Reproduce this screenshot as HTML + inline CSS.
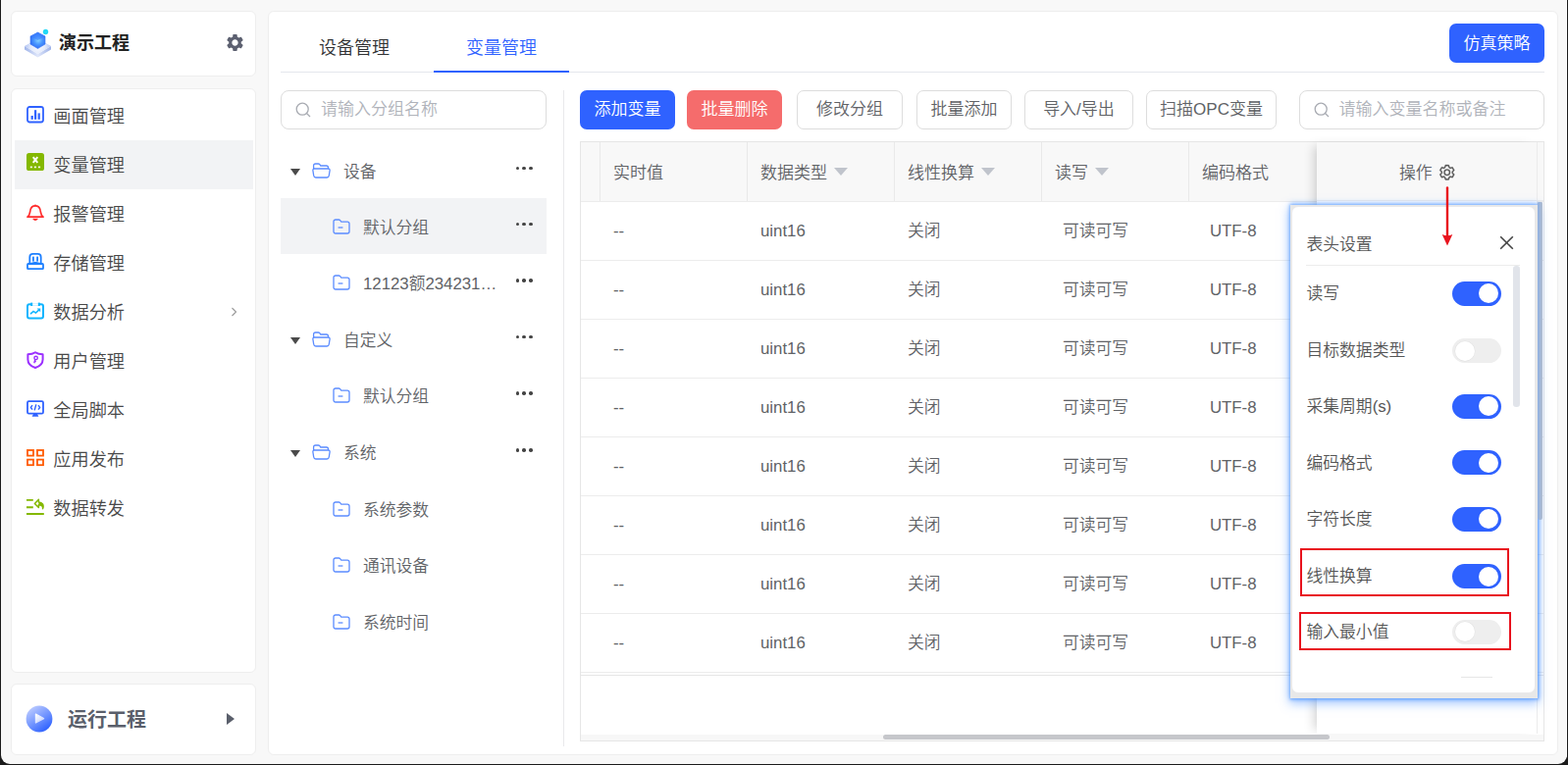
<!DOCTYPE html>
<html lang="zh-CN">
<head>
<meta charset="utf-8">
<title>变量管理</title>
<style>
*{box-sizing:border-box;margin:0;padding:0}
html,body{width:1598px;height:780px;overflow:hidden;background:#1b1b1b}
body{font-family:"Liberation Sans","Noto Sans CJK SC",sans-serif;color:#333;position:relative;font-weight:350}
.win{position:absolute;left:1px;top:0;width:1596px;height:779px;background:#f8f8f8;border-radius:0 0 9px 9px;overflow:hidden}
.cv{position:absolute;left:-1px;top:0;width:1598px;height:780px}
.abs{position:absolute}
.panel{position:absolute;background:#fff;border:1px solid #eeeeee;border-radius:6px}
.t{position:absolute;white-space:nowrap;line-height:1}
/* sidebar */
.mi{position:absolute;left:15px;width:243px;height:50px}
.mi .t{left:39.300px;top:16.700px;font-size:18.200px;color:#484848}
.mi svg{position:absolute;left:12px;top:15px}
.mi.act{background:#f2f3f5}
/* tree */
.tr{position:absolute;left:286px;width:271px;height:57px}
.tr .t{font-size:16.800px;color:#606266;top:22.800px}
.dots{position:absolute;left:239.500px;top:24.800px;width:17px;height:4px}
.dots i{position:absolute;top:0;width:3.6px;height:3.6px;border-radius:50%;background:#444}
.caret{position:absolute;left:10px;top:26.800px;width:0;height:0;border-left:5.5px solid transparent;border-right:5.5px solid transparent;border-top:7px solid #4a4a4a}
/* buttons */
.btn{position:absolute;top:92px;height:40px;border-radius:7px;font-size:17px;text-align:center;line-height:38px;white-space:nowrap}
.btn.pl{border:1px solid #dddddd;background:#fff;color:#606266}
.inp{position:absolute;top:92px;height:40px;border:1px solid #dddddd;border-radius:8px;background:#fff}
.inp .t{font-size:17px;color:#b0b3ba;top:10px;left:40px}
/* table */
.th{position:absolute;top:145px;height:60px;background:#f8f8f8}
.vd{position:absolute;top:145px;width:1px;height:60px;background:#e9e9e9}
.th .t{font-size:17px;color:#606266;top:23px;left:14px}
.td{position:absolute;font-size:16.800px;color:#606266;white-space:nowrap;line-height:1}
.rl{position:absolute;left:592px;width:981px;height:1px;background:#ececec}
.sort{position:absolute;top:26px;width:0;height:0;border-left:7px solid transparent;border-right:7px solid transparent;border-top:8px solid #c0c4cc}
/* popover */
.sw{position:absolute;left:163px;width:50px;height:25px;border-radius:12.5px;background:#2f62ff}
.sw i{position:absolute;top:2.500px;left:26.500px;width:20px;height:20px;border-radius:50%;background:#fff}
.sw.off{background:#eeeeee}
.sw.off i{left:2.500px;box-shadow:0 0 0 .5px #e2e2e2}
.pl{}
.pr .t{font-size:16.800px;color:#555;left:14.500px}
</style>
</head>
<body>
<div class="win"><div class="cv">

<!-- ============ SIDEBAR ============ -->
<div class="panel" style="left:11px;top:11px;width:250px;height:67px"></div>
<svg class="abs" style="left:24px;top:28px" width="30" height="32" viewBox="0 0 30 32">
  <defs>
    <radialGradient id="lg1" cx="14.5" cy="20" r="13" gradientUnits="userSpaceOnUse"><stop offset="0" stop-color="#f7f9ff"/><stop offset="0.55" stop-color="#e3eafb"/><stop offset="1" stop-color="#b3c5f3"/></radialGradient>
    <radialGradient id="lg2" cx="15" cy="13" r="9.500" gradientUnits="userSpaceOnUse"><stop offset="0" stop-color="#86d2ff"/><stop offset="0.45" stop-color="#4a98ff"/><stop offset="1" stop-color="#2862f0"/></radialGradient>
    <linearGradient id="lg3" x1="0" y1="0" x2="1" y2="0"><stop offset="0" stop-color="#9fb4ea"/><stop offset="0.5" stop-color="#dfe6fa"/><stop offset="1" stop-color="#9cb1e8"/></linearGradient>
  </defs>
  <polygon points="1,19 14.500,27 28,19 28,22.500 14.500,30.500 1,22.500" fill="url(#lg3)"/>
  <polygon points="1,19 14.500,11.500 28,19 14.500,27" fill="url(#lg1)"/>
  <polygon points="7,9 14.500,5 22,9 22,17 14.500,21.500 7,17" fill="url(#lg2)" stroke="url(#lg2)" stroke-width="0.600" stroke-linejoin="round"/>
  <polygon points="7,9 14.500,5 22,9 14.500,13" fill="#3a7cff" opacity="0.550"/>
  <circle cx="22.500" cy="4.500" r="2.700" fill="#22d9f6"/>
</svg>
<div class="t" style="left:60px;top:35px;font-size:18px;font-weight:bold;color:#222">演示工程</div>
<svg class="abs" style="left:229px;top:32.5px" width="21" height="21" viewBox="0 0 24 24"><path fill="#5c6070" d="M19.14 12.94c.04-.3.06-.61.06-.94 0-.32-.02-.64-.07-.94l2.03-1.58a.49.49 0 0 0 .12-.61l-1.92-3.32a.488.488 0 0 0-.59-.22l-2.39.96c-.5-.38-1.03-.7-1.62-.94l-.36-2.54a.484.484 0 0 0-.48-.41h-3.84c-.24 0-.43.17-.47.41l-.36 2.54c-.59.24-1.13.57-1.62.94l-2.39-.96c-.22-.08-.47 0-.59.22L2.74 8.87c-.12.21-.08.47.12.61l2.03 1.58c-.05.3-.09.63-.09.94s.02.64.07.94l-2.03 1.58a.49.49 0 0 0-.12.61l1.92 3.32c.12.22.37.29.59.22l2.39-.96c.5.38 1.03.7 1.62.94l.36 2.54c.05.24.24.41.48.41h3.84c.24 0 .44-.17.47-.41l.36-2.54c.59-.24 1.13-.56 1.62-.94l2.39.96c.22.08.47 0 .59-.22l1.92-3.32c.12-.22.07-.47-.12-.61l-2.01-1.58zM12 15.6c-1.98 0-3.600-1.62-3.600-3.600s1.62-3.600 3.600-3.600 3.600 1.62 3.600 3.600-1.62 3.600-3.600 3.600z"/></svg>

<div class="panel" style="left:11px;top:90px;width:250px;height:596px"></div>
<div class="mi" style="top:93px"><svg width="18" height="18" viewBox="0 0 18 18"><rect x="1" y="1" width="16" height="15.5" rx="2.2" fill="none" stroke="#2f62ff" stroke-width="1.8"/><rect x="4.6" y="10" width="2.2" height="3.8" fill="#2f62ff"/><rect x="8" y="4.2" width="2.2" height="9.6" fill="#2f62ff"/><rect x="11.6" y="7.4" width="2.2" height="6.4" fill="#2f62ff"/></svg><div class="t">画面管理</div></div>
<div class="mi act" style="top:143px"><svg style="top:13px" width="18" height="18" viewBox="0 0 18 18"><rect x="0" y="0" width="18" height="18" rx="2.6" fill="#84b800"/><path d="M6.700 4.200 L11.300 9.800 M11.300 4.200 L6.700 9.800" stroke="#fff" stroke-width="1.900"/><rect x="3.800" y="13.600" width="2.100" height="1.600" fill="#fff"/><rect x="7.900" y="13.600" width="2.100" height="1.600" fill="#fff"/><rect x="12" y="13.600" width="2.100" height="1.600" fill="#fff"/></svg><div class="t">变量管理</div></div>
<div class="mi" style="top:193px"><svg width="18" height="18" viewBox="0 0 18 18"><path d="M1 13.2 C3.6 11.2 3.4 8.8 3.9 6.4 C4.4 3.6 6.4 1.9 9 1.9 C11.6 1.9 13.6 3.6 14.1 6.4 C14.6 8.8 14.4 11.2 17 13.2 Z" fill="none" stroke="#ff2d2d" stroke-width="1.7" stroke-linejoin="round"/><path d="M6.2 14.8 H11.8 C11.4 16.2 10.3 16.9 9 16.9 C7.7 16.9 6.600 16.200 6.200 14.800 Z" fill="#ff2d2d"/><circle cx="9" cy="1.6" r="1" fill="#ff2d2d"/></svg><div class="t">报警管理</div></div>
<div class="mi" style="top:243px"><svg width="18" height="18" viewBox="0 0 18 18"><path d="M3.300 10.600 V4.200 C3.300 2 4.500 0.900 6.500 0.900 H11.500 C13.500 0.900 14.700 2 14.700 4.200 V10.600" fill="none" stroke="#1e80ff" stroke-width="1.800"/><rect x="1" y="11" width="16" height="5.200" rx="0.800" fill="none" stroke="#1e80ff" stroke-width="1.800"/><rect x="6" y="3.600" width="1.800" height="5" fill="#1e80ff"/><rect x="10.200" y="3.600" width="1.800" height="5" fill="#1e80ff"/><path d="M3 11 L9 9.400 L15 11" fill="none" stroke="#1e80ff" stroke-width="1.400"/></svg><div class="t">存储管理</div></div>
<div class="mi" style="top:293px"><svg width="18" height="18" viewBox="0 0 18 18"><rect x="1" y="2.200" width="16" height="14.400" rx="2" fill="none" stroke="#10b5ff" stroke-width="2"/><rect x="4.200" y="0.600" width="2" height="3.4" fill="#10b5ff"/><rect x="11.800" y="0.600" width="2" height="3.400" fill="#10b5ff"/><rect x="6.2" y="1.2" width="5.6" height="2" fill="#fff"/><path d="M4 12.2 L7 9.4 L9.4 11 L13.4 7.4" fill="none" stroke="#10b5ff" stroke-width="1.6"/><path d="M10.6 6.6 H14.2 V10.200 Z" fill="#10b5ff"/></svg><div class="t">数据分析</div></div>
<div class="mi" style="top:343px"><svg width="18" height="18" viewBox="0 0 18 18"><path d="M9 1.2 C11 2.6 13.600 3.200 16.600 3.200 V8.400 C16.600 12.400 13.600 15.400 9 17 C4.400 15.400 1.400 12.400 1.400 8.400 V3.200 C4.400 3.200 7 2.600 9 1.200 Z" fill="none" stroke="#9b30ff" stroke-width="2" stroke-linejoin="round"/><circle cx="9.600" cy="7" r="1.700" fill="none" stroke="#9b30ff" stroke-width="1.400"/><path d="M8.800 8.400 L7.800 12.200 M7.600 10.600 H9.800" stroke="#9b30ff" stroke-width="1.400" fill="none"/></svg><div class="t">用户管理</div></div>
<div class="mi" style="top:393px"><svg width="18" height="18" viewBox="0 0 18 18"><rect x="1" y="1.200" width="16" height="12.400" rx="1.400" fill="none" stroke="#2f62ff" stroke-width="1.800"/><path d="M5.600 16.800 L7 14 H11 L12.400 16.800 Z" fill="#2f62ff"/><path d="M6 5.200 L4.400 7.400 L6 9.600 M12 5.200 L13.600 7.400 L12 9.600 M9.800 4.400 L8.200 10.400" fill="none" stroke="#2f62ff" stroke-width="1.400"/></svg><div class="t">全局脚本</div></div>
<div class="mi" style="top:443px"><svg width="18" height="18" viewBox="0 0 18 18"><g fill="none" stroke="#ff5a00" stroke-width="1.800"><rect x="1" y="1" width="6" height="5.600"/><rect x="11" y="1" width="6" height="5.600"/><rect x="1" y="10.600" width="6" height="5.600"/><rect x="11" y="10.600" width="6" height="5.600"/></g></svg><div class="t">应用发布</div></div>
<div class="mi" style="top:493px"><svg width="18" height="18" viewBox="0 0 18 18"><g fill="none" stroke="#84b800"><path d="M0 1.900 H6.800 M0 9.200 H6.800 M0 16 H17.800" stroke-width="1.900"/><path d="M16.600 10.600 C16.900 8 15.200 6.800 12.400 6.800 V9.600 L8.400 5.400 L12.400 1.200 V3.900 C16.200 4 18 7 16.600 10.600 Z" stroke-width="1.500" stroke-linejoin="round"/></g><path d="M16.600 10.600 C16.900 8 15.200 6.800 12.400 6.800 V3.900 C16.200 4 18 7 16.600 10.600 Z" fill="#84b800"/></svg><div class="t">数据转发</div></div>
<svg class="abs" style="left:234px;top:312px" width="9" height="12" viewBox="0 0 9 12"><path d="M2.5 2 L6.500 6 L2.500 10" fill="none" stroke="#999" stroke-width="1.100"/></svg>

<div class="panel" style="left:11px;top:697px;width:250px;height:73px"></div>
<svg class="abs" style="left:26px;top:719px" width="28" height="28" viewBox="0 0 28 28">
  <defs>
    <linearGradient id="pg1" x1="0.15" y1="0.1" x2="0.75" y2="0.95"><stop offset="0" stop-color="#b9c9ff"/><stop offset="0.55" stop-color="#6e92ff"/><stop offset="1" stop-color="#2f62ff"/></linearGradient>
    <linearGradient id="pg2" x1="0" y1="0" x2="0.6" y2="1"><stop offset="0" stop-color="#ffffff"/><stop offset="1" stop-color="#c9d6ff"/></linearGradient>
  </defs>
  <circle cx="14" cy="14" r="13.4" fill="url(#pg1)"/>
  <path d="M10.400 9 L18.600 13.600 L10.400 18 Z" fill="url(#pg2)" stroke="url(#pg2)" stroke-width="1.200" stroke-linejoin="round"/>
</svg>
<div class="t" style="left:69px;top:724px;font-size:20px;font-weight:bold;color:#5a5f6b">运行工程</div>
<div class="abs" style="left:231px;top:727px;width:0;height:0;border-top:6px solid transparent;border-bottom:6px solid transparent;border-left:8px solid #5a5f6b"></div>

<!-- ============ MAIN ============ -->
<div class="panel" style="left:273px;top:11px;width:1315px;height:759px"></div>
<div class="abs" style="left:286px;top:73px;width:1288px;height:1px;background:#e4e7ed"></div>
<div class="abs" style="left:442px;top:72px;width:138px;height:2px;background:#2f62ff"></div>
<div class="t" style="left:325px;top:40px;font-size:18px;color:#303133">设备管理</div>
<div class="t" style="left:475px;top:40px;font-size:18px;color:#2f62ff">变量管理</div>
<div class="btn" style="left:1477px;top:24px;width:97px;height:40px;line-height:41px;background:#2f62ff;color:#fff">仿真策略</div>
<div class="inp" style="left:286px;width:271px"><svg class="abs" style="left:13.500px;top:10.500px" width="16" height="16" viewBox="0 0 16 16"><circle cx="7.2" cy="7.200" r="6" fill="none" stroke="#a8abb2" stroke-width="1.300"/><path d="M11.500 11.500 L15 15" stroke="#a8abb2" stroke-width="1.300"/></svg><div class="t" style="left:40px">请输入分组名称</div></div>
<div class="abs" style="left:574px;top:92px;width:1px;height:669px;background:#e9e9eb"></div>
<div class="tr" style="top:145.1px"><div class="caret"></div><svg class="abs" style="left:32px;top:20.800px" width="19" height="16" viewBox="0 0 19 16"><path d="M1.600 6 V3 C1.600 1.800 2.300 1 3.500 1 H6.400 C7 1 7.400 1.200 7.800 1.700 L8.800 3 H14.600 C15.800 3 16.500 3.700 16.500 4.900 V6 M2.300 6 H16.700 C17.700 6 18.300 6.800 18.100 7.800 L17.300 13 C17.100 14.200 16.300 15 15.100 15 H3.900 C2.700 15 1.900 14.200 1.700 13 L0.900 7.800 C0.700 6.800 1.300 6 2.300 6 Z" fill="none" stroke="#5b8cff" stroke-width="1.300" stroke-linejoin="round"/></svg><div class="t" style="left:64px">设备</div><div class="dots"><i style="left:0"></i><i style="left:6.800px"></i><i style="left:13.600px"></i></div></div>
<div class="tr" style="top:202.1px;background:#f2f3f5"><svg class="abs" style="left:53px;top:20.800px" width="18" height="16" viewBox="0 0 18 16"><path d="M1 3 C1 1.800 1.800 1 3 1 H6.200 C6.800 1 7.200 1.200 7.600 1.700 L8.800 3.200 H15 C16.200 3.200 17 4 17 5.200 V13 C17 14.200 16.200 15 15 15 H3 C1.800 15 1 14.200 1 13 Z" fill="none" stroke="#5b8cff" stroke-width="1.300" stroke-linejoin="round"/><path d="M5.600 9 H10.400" stroke="#5b8cff" stroke-width="1.300"/></svg><div class="t" style="left:84px">默认分组</div><div class="dots"><i style="left:0"></i><i style="left:6.800px"></i><i style="left:13.600px"></i></div></div>
<div class="tr" style="top:259.6px"><svg class="abs" style="left:53px;top:20.800px" width="18" height="16" viewBox="0 0 18 16"><path d="M1 3 C1 1.800 1.800 1 3 1 H6.200 C6.800 1 7.200 1.200 7.600 1.700 L8.800 3.200 H15 C16.200 3.200 17 4 17 5.200 V13 C17 14.200 16.200 15 15 15 H3 C1.800 15 1 14.200 1 13 Z" fill="none" stroke="#5b8cff" stroke-width="1.300" stroke-linejoin="round"/><path d="M5.600 9 H10.400" stroke="#5b8cff" stroke-width="1.300"/></svg><div class="t" style="left:84px">12123额234231…</div><div class="dots"><i style="left:0"></i><i style="left:6.800px"></i><i style="left:13.600px"></i></div></div>
<div class="tr" style="top:317.1px"><div class="caret"></div><svg class="abs" style="left:32px;top:20.800px" width="19" height="16" viewBox="0 0 19 16"><path d="M1.600 6 V3 C1.600 1.800 2.300 1 3.500 1 H6.400 C7 1 7.400 1.200 7.800 1.700 L8.800 3 H14.600 C15.800 3 16.500 3.700 16.500 4.900 V6 M2.300 6 H16.700 C17.700 6 18.300 6.800 18.100 7.800 L17.300 13 C17.100 14.200 16.300 15 15.100 15 H3.900 C2.700 15 1.900 14.200 1.700 13 L0.900 7.800 C0.700 6.800 1.300 6 2.300 6 Z" fill="none" stroke="#5b8cff" stroke-width="1.300" stroke-linejoin="round"/></svg><div class="t" style="left:64px">自定义</div><div class="dots"><i style="left:0"></i><i style="left:6.800px"></i><i style="left:13.600px"></i></div></div>
<div class="tr" style="top:374.7px"><svg class="abs" style="left:53px;top:20.800px" width="18" height="16" viewBox="0 0 18 16"><path d="M1 3 C1 1.800 1.800 1 3 1 H6.200 C6.800 1 7.200 1.200 7.600 1.700 L8.800 3.200 H15 C16.200 3.200 17 4 17 5.200 V13 C17 14.200 16.200 15 15 15 H3 C1.800 15 1 14.200 1 13 Z" fill="none" stroke="#5b8cff" stroke-width="1.300" stroke-linejoin="round"/><path d="M5.600 9 H10.400" stroke="#5b8cff" stroke-width="1.300"/></svg><div class="t" style="left:84px">默认分组</div><div class="dots"><i style="left:0"></i><i style="left:6.800px"></i><i style="left:13.600px"></i></div></div>
<div class="tr" style="top:432.2px"><div class="caret"></div><svg class="abs" style="left:32px;top:20.800px" width="19" height="16" viewBox="0 0 19 16"><path d="M1.600 6 V3 C1.600 1.800 2.300 1 3.500 1 H6.400 C7 1 7.400 1.200 7.800 1.700 L8.800 3 H14.600 C15.800 3 16.500 3.700 16.500 4.900 V6 M2.300 6 H16.700 C17.700 6 18.300 6.800 18.100 7.800 L17.300 13 C17.100 14.200 16.300 15 15.100 15 H3.900 C2.700 15 1.900 14.200 1.700 13 L0.900 7.800 C0.700 6.800 1.300 6 2.300 6 Z" fill="none" stroke="#5b8cff" stroke-width="1.300" stroke-linejoin="round"/></svg><div class="t" style="left:64px">系统</div><div class="dots"><i style="left:0"></i><i style="left:6.800px"></i><i style="left:13.600px"></i></div></div>
<div class="tr" style="top:489.8px"><svg class="abs" style="left:53px;top:20.800px" width="18" height="16" viewBox="0 0 18 16"><path d="M1 3 C1 1.800 1.800 1 3 1 H6.200 C6.800 1 7.200 1.200 7.600 1.700 L8.800 3.200 H15 C16.200 3.200 17 4 17 5.200 V13 C17 14.200 16.200 15 15 15 H3 C1.800 15 1 14.200 1 13 Z" fill="none" stroke="#5b8cff" stroke-width="1.300" stroke-linejoin="round"/><path d="M5.600 9 H10.400" stroke="#5b8cff" stroke-width="1.300"/></svg><div class="t" style="left:84px">系统参数</div></div>
<div class="tr" style="top:547.3px"><svg class="abs" style="left:53px;top:20.800px" width="18" height="16" viewBox="0 0 18 16"><path d="M1 3 C1 1.800 1.800 1 3 1 H6.200 C6.800 1 7.200 1.200 7.600 1.700 L8.800 3.200 H15 C16.200 3.200 17 4 17 5.200 V13 C17 14.200 16.200 15 15 15 H3 C1.800 15 1 14.200 1 13 Z" fill="none" stroke="#5b8cff" stroke-width="1.300" stroke-linejoin="round"/><path d="M5.600 9 H10.400" stroke="#5b8cff" stroke-width="1.300"/></svg><div class="t" style="left:84px">通讯设备</div></div>
<div class="tr" style="top:604.9px"><svg class="abs" style="left:53px;top:20.800px" width="18" height="16" viewBox="0 0 18 16"><path d="M1 3 C1 1.800 1.800 1 3 1 H6.200 C6.800 1 7.200 1.200 7.600 1.700 L8.800 3.200 H15 C16.200 3.200 17 4 17 5.200 V13 C17 14.200 16.200 15 15 15 H3 C1.800 15 1 14.200 1 13 Z" fill="none" stroke="#5b8cff" stroke-width="1.300" stroke-linejoin="round"/><path d="M5.600 9 H10.400" stroke="#5b8cff" stroke-width="1.300"/></svg><div class="t" style="left:84px">系统时间</div></div>
<div class="btn" style="left:591px;width:97px;background:#2f62ff;color:#fff;line-height:40px">添加变量</div>
<div class="btn" style="left:700px;width:97px;background:#f56c6c;color:#fff;line-height:40px">批量删除</div>
<div class="btn pl" style="left:812px;width:108px">修改分组</div>
<div class="btn pl" style="left:934px;width:97px">批量添加</div>
<div class="btn pl" style="left:1044px;width:111px">导入/导出</div>
<div class="btn pl" style="left:1168px;width:133px">扫描OPC变量</div>
<div class="inp" style="left:1324px;width:250px"><svg class="abs" style="left:13.500px;top:10.500px" width="16" height="16" viewBox="0 0 16 16"><circle cx="7.2" cy="7.200" r="6" fill="none" stroke="#a8abb2" stroke-width="1.300"/><path d="M11.500 11.500 L15 15" stroke="#a8abb2" stroke-width="1.300"/></svg><div class="t" style="left:39.500px">请输入变量名称或备注</div></div>
<div class="abs" style="left:591px;top:144px;width:983px;height:612px;border:1px solid #e6e6e6;background:#fff"></div>
<div class="th" style="left:592px;width:20px"></div>
<div class="th" style="left:611px;width:151px"><div class="t">实时值</div></div>
<div class="th" style="left:761px;width:151px"><div class="t">数据类型</div><div class="sort" style="left:88.7px"></div></div>
<div class="th" style="left:911px;width:151px"><div class="t">线性换算</div><div class="sort" style="left:88.7px"></div></div>
<div class="th" style="left:1061px;width:151px"><div class="t">读写</div><div class="sort" style="left:55.1px"></div></div>
<div class="th" style="left:1211px;width:132px"><div class="t">编码格式</div></div>
<div class="vd" style="left:611px"></div><div class="vd" style="left:761px"></div><div class="vd" style="left:911px"></div><div class="vd" style="left:1061px"></div><div class="vd" style="left:1211px"></div>
<div class="rl" style="top:205px"></div>
<div class="rl" style="top:265px"></div>
<div class="td" style="left:625px;top:228px">--</div>
<div class="td" style="left:775px;top:228px">uint16</div>
<div class="td" style="left:925px;top:228px">关闭</div>
<div class="td" style="left:1083px;top:228px">可读可写</div>
<div class="td" style="left:1233px;top:228px">UTF-8</div>
<div class="rl" style="top:325px"></div>
<div class="td" style="left:625px;top:288px">--</div>
<div class="td" style="left:775px;top:288px">uint16</div>
<div class="td" style="left:925px;top:288px">关闭</div>
<div class="td" style="left:1083px;top:288px">可读可写</div>
<div class="td" style="left:1233px;top:288px">UTF-8</div>
<div class="rl" style="top:385px"></div>
<div class="td" style="left:625px;top:348px">--</div>
<div class="td" style="left:775px;top:348px">uint16</div>
<div class="td" style="left:925px;top:348px">关闭</div>
<div class="td" style="left:1083px;top:348px">可读可写</div>
<div class="td" style="left:1233px;top:348px">UTF-8</div>
<div class="rl" style="top:445px"></div>
<div class="td" style="left:625px;top:408px">--</div>
<div class="td" style="left:775px;top:408px">uint16</div>
<div class="td" style="left:925px;top:408px">关闭</div>
<div class="td" style="left:1083px;top:408px">可读可写</div>
<div class="td" style="left:1233px;top:408px">UTF-8</div>
<div class="rl" style="top:505px"></div>
<div class="td" style="left:625px;top:468px">--</div>
<div class="td" style="left:775px;top:468px">uint16</div>
<div class="td" style="left:925px;top:468px">关闭</div>
<div class="td" style="left:1083px;top:468px">可读可写</div>
<div class="td" style="left:1233px;top:468px">UTF-8</div>
<div class="rl" style="top:565px"></div>
<div class="td" style="left:625px;top:528px">--</div>
<div class="td" style="left:775px;top:528px">uint16</div>
<div class="td" style="left:925px;top:528px">关闭</div>
<div class="td" style="left:1083px;top:528px">可读可写</div>
<div class="td" style="left:1233px;top:528px">UTF-8</div>
<div class="rl" style="top:625px"></div>
<div class="td" style="left:625px;top:588px">--</div>
<div class="td" style="left:775px;top:588px">uint16</div>
<div class="td" style="left:925px;top:588px">关闭</div>
<div class="td" style="left:1083px;top:588px">可读可写</div>
<div class="td" style="left:1233px;top:588px">UTF-8</div>
<div class="rl" style="top:685px"></div>
<div class="rl" style="top:688px;background:#e6e6e6"></div>
<div class="td" style="left:625px;top:648px">--</div>
<div class="td" style="left:775px;top:648px">uint16</div>
<div class="td" style="left:925px;top:648px">关闭</div>
<div class="td" style="left:1083px;top:648px">可读可写</div>
<div class="td" style="left:1233px;top:648px">UTF-8</div>
<div class="abs" style="left:1342px;top:145px;width:225px;height:603px;background:#fff;box-shadow:-7px 0 10px -4px rgba(0,0,0,.17);border-right:1px solid #ececec"></div>
<div class="abs" style="left:1342px;top:145px;width:225px;height:60px;background:#f8f8f8;border-bottom:1px solid #ececec;border-right:1px solid #ececec"></div>
<div class="abs" style="left:1567px;top:145px;width:6px;height:60px;background:#f8f8f8;border-bottom:1px solid #ececec"></div>
<div class="t" style="left:1426px;top:168.500px;font-size:16.800px;color:#606266">操作</div>
<svg class="abs" style="left:1465.500px;top:166.500px" width="17.500" height="17.500" viewBox="0 0 1024 1024"><path fill="#555" stroke="#555" stroke-width="22" d="M600.704 64a32 32 0 0 1 30.464 22.208l35.200 109.376c14.784 7.232 28.928 15.360 42.432 24.512l112.384-24.192a32 32 0 0 1 34.432 15.360L944.320 364.800a32 32 0 0 1-4.032 37.504l-77.120 85.120a357.120 357.120 0 0 1 0 49.024l77.120 85.248a32 32 0 0 1 4.032 37.504l-88.704 153.600a32 32 0 0 1-34.432 15.296L708.800 803.904c-13.440 9.088-27.648 17.280-42.368 24.512l-35.264 109.376A32 32 0 0 1 600.704 960H423.296a32 32 0 0 1-30.464-22.208L357.696 828.480a351.616 351.616 0 0 1-42.560-24.640l-112.320 24.256a32 32 0 0 1-34.432-15.360L79.680 659.200a32 32 0 0 1 4.032-37.504l77.120-85.248a357.120 357.120 0 0 1 0-48.896l-77.120-85.248A32 32 0 0 1 79.680 364.800l88.704-153.600a32 32 0 0 1 34.432-15.296l112.320 24.256c13.568-9.152 27.776-17.408 42.560-24.640l35.200-109.312A32 32 0 0 1 423.232 64H600.640zm-23.424 64H446.720l-36.352 113.088-24.512 11.968a294.113 294.113 0 0 0-34.816 20.096l-22.656 15.360-116.224-25.088-65.280 113.152 79.680 88.192-1.920 27.136a293.120 293.120 0 0 0 0 40.192l1.920 27.136-79.808 88.192 65.344 113.152 116.224-25.024 22.656 15.296a294.113 294.113 0 0 0 34.816 20.096l24.512 11.968L446.720 896h130.688l36.480-113.152 24.448-11.904a288.282 288.282 0 0 0 34.752-20.096l22.592-15.296 116.288 25.024 65.280-113.152-79.744-88.192 1.920-27.136a293.120 293.120 0 0 0 0-40.256l-1.920-27.136 79.808-88.128-65.344-113.152-116.288 24.960-22.592-15.232a287.616 287.616 0 0 0-34.752-20.096l-24.448-11.904L577.344 128zM512 320a192 192 0 1 1 0 384 192 192 0 0 1 0-384zm0 64a128 128 0 1 0 0 256 128 128 0 0 0 0-256z"/></svg>
<div class="abs" style="left:592px;top:749px;width:981px;height:6px;background:#f7f7f7"></div>
<div class="abs" style="left:900px;top:749px;width:455px;height:5px;border-radius:3px;background:#c6c7cb"></div>
<div class="abs" style="left:1315px;top:208.500px;width:252px;height:503px;background:#e8e8e8;box-shadow:0 4px 10px 1px rgba(64,140,255,.5),0 0 3px 1.500px rgba(64,140,255,.6),0 -2px 5px 0 rgba(64,140,255,.35)"></div>
<div class="abs" style="left:1567px;top:206px;width:4.800px;height:323.500px;background:linear-gradient(90deg,#8fb0e2,#b2bdcf);border-radius:1px 1px 2px 2px"></div>
<div class="abs pr" style="left:1316px;top:210px;width:249px;height:497px;background:#fff;border-radius:7px;border:1px solid #e9e9eb;overflow:hidden">
<div class="t" style="top:30.500px;font-size:16.800px;color:#555">表头设置</div>
<svg class="abs" style="left:210.500px;top:28.500px" width="15" height="15" viewBox="0 0 15 15"><path d="M1.200 1.200 L13.800 13.800 M13.800 1.200 L1.200 13.800" stroke="#444" stroke-width="1.600" fill="none"/></svg>
<div class="abs" style="left:14px;top:58.500px;width:218px;height:1px;background:#ececec"></div>
<div class="abs" style="left:225.400px;top:60px;width:6.500px;height:144px;border-radius:3.200px;background:#e1e4ea"></div>
<div class="t" style="top:81.3px">读写</div>
<div class="sw" style="top:75.9px"><i></i></div>
<div class="t" style="top:139.4px">目标数据类型</div>
<div class="sw off" style="top:134.0px"><i></i></div>
<div class="t" style="top:196.3px">采集周期(s)</div>
<div class="sw" style="top:190.9px"><i></i></div>
<div class="t" style="top:253.7px">编码格式</div>
<div class="sw" style="top:248.3px"><i></i></div>
<div class="t" style="top:311.1px">字符长度</div>
<div class="sw" style="top:305.8px"><i></i></div>
<div class="t" style="top:368.6px">线性换算</div>
<div class="sw" style="top:364.0px"><i></i></div>
<div class="t" style="top:426.1px">输入最小值</div>
<div class="sw off" style="top:420.7px"><i></i></div>
<div class="abs" style="left:172px;top:478.500px;width:32px;height:1px;background:#e6e6e6"></div>
</div>
<div class="abs" style="left:1325px;top:559px;width:213px;height:49px;border:2px solid #e8121d"></div>
<div class="abs" style="left:1324px;top:624px;width:216px;height:39px;border:2px solid #e8121d"></div>
<svg class="abs" style="left:1466px;top:188px" width="18" height="66" viewBox="0 0 18 66"><path d="M9 3.500 V54" stroke="#e8121d" stroke-width="2.400" stroke-linecap="round"/><path d="M3.700 51 L9 62.600 L14.300 51 Q9 53.500 3.700 51 Z" fill="#e8121d"/></svg>

<div class="abs" style="left:1596px;top:0;width:1px;height:772px;background:#fff"></div>
</div></div>
</body>
</html>
